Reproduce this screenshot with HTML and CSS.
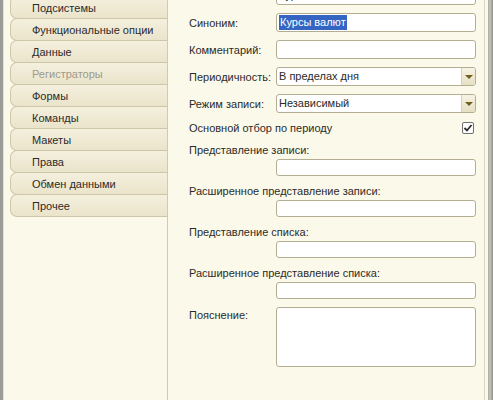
FILE: index.html
```html
<!DOCTYPE html>
<html>
<head>
	<meta charset="UTF-8">
	<title>Регистр сведений</title>
	<link rel="stylesheet" href="styles.css">
</head>
<body>

<div class="window">
	<div class="frame-left"></div>

	<div class="tabs">
		<div class="tab-list">
			<div class="tab">Подсистемы</div>
			<div class="tab">Функциональные опции</div>
			<div class="tab">Данные</div>
			<div class="tab disabled">Регистраторы</div>
			<div class="tab">Формы</div>
			<div class="tab">Команды</div>
			<div class="tab">Макеты</div>
			<div class="tab">Права</div>
			<div class="tab">Обмен данными</div>
			<div class="tab">Прочее</div>
		</div>
	</div>

	<div class="form">
		<div class="fields">
			<div class="row">
				<div class="label">Имя:</div>
				<div class="field">КурсыВалют</div>
			</div>
			<div class="row">
				<div class="label">Синоним:</div>
				<div class="field"><span class="selected">Курсы валют</span></div>
			</div>
			<div class="row">
				<div class="label">Комментарий:</div>
				<div class="field"></div>
			</div>
			<div class="row">
				<div class="label">Периодичность:</div>
				<div class="field combo">
					<span class="value">В пределах дня</span>
					<span class="drop"><i></i></span>
				</div>
			</div>
			<div class="row">
				<div class="label">Режим записи:</div>
				<div class="field combo">
					<span class="value">Независимый</span>
					<span class="drop"><i></i></span>
				</div>
			</div>

			<div class="check-row">
				<span>Основной отбор по периоду</span>
				<span class="checkbox">
					<svg width="10" height="10" viewBox="0 0 10 10"><path d="M1.5 5 L4 7.5 L8.5 2" fill="none" stroke="#2a2a2a" stroke-width="1.8"/></svg>
				</span>
			</div>

			<div class="stack">
				<div class="stack-label">Представление записи:</div>
				<div class="field small"></div>
			</div>
			<div class="stack">
				<div class="stack-label">Расширенное представление записи:</div>
				<div class="field small"></div>
			</div>
			<div class="stack">
				<div class="stack-label">Представление списка:</div>
				<div class="field small"></div>
			</div>
			<div class="stack">
				<div class="stack-label">Расширенное представление списка:</div>
				<div class="field small"></div>
			</div>

			<div class="note-row">
				<div class="label">Пояснение:</div>
				<div class="field note"></div>
			</div>
		</div>
	</div>

	<div class="frame-right"></div>
</div>

</body>
</html>
```

FILE: styles.css
```css
body{
	margin: 0;
	background-color: #fbf9e9;
}

.window{
	display: flex;
	width: 493px;
	height: 400px;
	overflow: hidden;
	background-color: #fbf9e9;
	font-family: "Liberation Sans", Arial, sans-serif;
	font-size: 11px;
	color: #2b2b2b;
}

.frame-left{
	width: 3px;
	background-color: #9c9c98;
	border-right: 1px solid #e4e2d8;
}

.frame-right{
	width: 8px;
	border-left: 1px solid #d6d3c4;
	background: linear-gradient(to right, #fbf9e9 0, #fbf9e9 3px, #a8a8a0 3px, #c8c8c0 5px, #8e8e88 8px);
}

/* left tab column */
.tabs{
	width: 157px;
	padding-left: 6px;
	border-right: 1px solid #cfcab2;
}
.tab-list{
	margin-top: -4px;
}
.tab{
	height: 21px;
	line-height: 22px;
	padding-left: 21px;
	margin-top: -1px;
	border: 1px solid #cdc6a8;
	border-right: none;
	border-radius: 7px 0 0 7px;
	background: linear-gradient(to bottom, #f4f0de, #ebe4cb);
	white-space: nowrap;
}
.tab.disabled{
	color: #9d9a8a;
}

/* right form */
.form{
	flex: 1;
	padding: 0 8px 0 21px;
}
.fields{
	margin-top: -14px;
}

.row{
	display: flex;
	align-items: center;
	height: 19px;
	margin-bottom: 8px;
}
.label{
	width: 87px;
	flex-shrink: 0;
}

.field{
	box-sizing: border-box;
	width: 200px;
	height: 19px;
	border: 1px solid #b3ad92;
	border-radius: 3px;
	background-color: #fff;
	padding-left: 2px;
	line-height: 17px;
	white-space: nowrap;
	overflow: hidden;
}
.field.small{
	height: 17px;
	margin-left: 87px;
}

.selected{
	display: inline-block;
	margin-top: 1px;
	line-height: 15px;
	vertical-align: top;
	background-color: #3465c3;
	color: #fff;
	padding: 0 1px;
}

.combo{
	display: flex;
	padding-right: 0;
}
.combo .value{
	flex: 1;
}
.drop{
	width: 13px;
	border-left: 1px solid #d8d2b8;
	background: linear-gradient(to bottom, #f7f3e3, #e6dfc4);
	display: flex;
	align-items: center;
	justify-content: center;
}
.drop i{
	width: 0;
	height: 0;
	border-left: 4px solid transparent;
	border-right: 4px solid transparent;
	border-top: 4px solid #6f5f1c;
}

.check-row{
	display: flex;
	align-items: center;
	justify-content: space-between;
	height: 14px;
}
.checkbox{
	box-sizing: border-box;
	width: 12px;
	height: 12px;
	margin-right: 2px;
	border: 1px solid #707070;
	border-radius: 2px;
	background-color: #fff;
	display: flex;
	align-items: center;
	justify-content: center;
}

.stack{
	margin-top: 8px;
}
.stack-label{
	line-height: 14px;
	margin-bottom: 2px;
	white-space: nowrap;
}

.note-row{
	display: flex;
	margin-top: 8px;
}
.note-row .label{
	padding-top: 2px;
}
.field.note{
	height: 60px;
}
```
